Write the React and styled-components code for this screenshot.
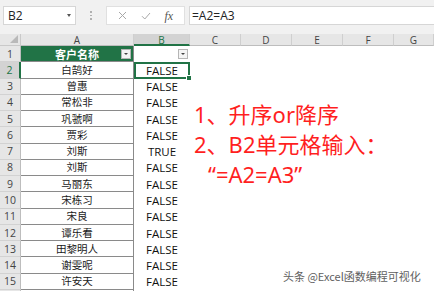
import React from "react";
import styled, { createGlobalStyle } from "styled-components";

const Global = createGlobalStyle`
  html, body { margin: 0; padding: 0; background: #fff; }
  body { width: 434px; height: 291px; overflow: hidden; font-family: "Open Sans", "Noto Sans CJK SC", sans-serif; }
`;

const Page = styled.div`
  position: relative;
  width: 434px;
  height: 291px;
  overflow: hidden;
  background: #fff;
`;

const FormulaBar = styled.div`
  height: 34px;
  box-sizing: border-box;
  background: #f1f1f1;
  display: grid;
  grid-template-columns: 73px 22px 79px 1fr;
  column-gap: 4px;
  padding: 6px 0 9px 3px;
  align-items: stretch;
`;

const NameBox = styled.div`
  background: #fff;
  border: 1px solid #d6d6d6;
  display: flex;
  align-items: center;
  justify-content: space-between;
  padding: 0 4px 0 4px;
  font-size: 12px;
  line-height: 14px;
  color: #222;
`;

const Caret = styled.span`
  width: 0;
  height: 0;
  border-left: 2.5px solid transparent;
  border-right: 2.5px solid transparent;
  border-top: 3px solid #555;
`;

const Dots = styled.div`
  display: flex;
  flex-direction: column;
  align-items: center;
  justify-content: center;
  gap: 2px;
  & span { width: 1.5px; height: 1.5px; background: #b0b0b0; }
`;

const FnBox = styled.div`
  background: #fff;
  border: 1px solid #e0e0e0;
  display: flex;
  align-items: center;
  justify-content: space-around;
  padding: 0 4px;
  color: #a8a8a8;
`;

const Fx = styled.span`
  font-family: "Liberation Serif", serif;
  font-style: italic;
  font-size: 12px;
  line-height: 14px;
  color: #555;
`;

const FormulaInput = styled.div`
  background: #fff;
  border: 1px solid #d6d6d6;
  border-right: none;
  display: flex;
  align-items: center;
  padding-left: 2px;
  font-size: 12px;
  line-height: 14px;
  color: #222;
`;

const Sheet = styled.div`
  display: grid;
  grid-template-columns: 21px 113px 56px 51px 51px 51px 51px 1fr;
  grid-template-rows: 12px repeat(16, 16.27px);
`;

const Corner = styled.div`
  background: #e6e6e6;
  border-right: 1px solid #c9c9c9;
  border-bottom: 1px solid #c9c9c9;
  display: flex;
  align-items: flex-end;
  justify-content: flex-end;
  padding: 0 2px 2px 0;
  & span {
    width: 8px;
    height: 8px;
    background: #b9b9b9;
    clip-path: polygon(100% 0, 100% 100%, 0 100%);
  }
`;

const ColHead = styled.div`
  box-sizing: border-box;
  background: ${(p) => (p.$active ? "#d3d3d3" : "#e6e6e6")};
  border-right: 1px solid #cfcfcf;
  border-bottom: ${(p) => (p.$active ? "2px solid #217346" : "1px solid #bdbdbd")};
  color: ${(p) => (p.$active ? "#217346" : "#444")};
  font-size: 10px;
  line-height: 10px;
  display: flex;
  justify-content: center;
  align-items: center;
  padding-top: 1px;
`;

const RowHead = styled.div`
  box-sizing: border-box;
  background: ${(p) => (p.$active ? "#d3d3d3" : "#e6e6e6")};
  border-right: ${(p) => (p.$active ? "2px solid #217346" : "1px solid #bdbdbd")};
  border-bottom: 1px solid #d2d2d2;
  color: ${(p) => (p.$active ? "#217346" : "#444")};
  font-size: 10.5px;
  line-height: 12px;
  display: flex;
  justify-content: center;
  align-items: center;
`;

const NameCell = styled.div`
  box-sizing: border-box;
  background: ${(p) => (p.$head ? "#217346" : "#fff")};
  color: ${(p) => (p.$head ? "#fff" : "#1a1a1a")};
  font-weight: ${(p) => (p.$head ? 700 : 400)};
  font-family: "Noto Sans CJK SC", sans-serif;
  font-size: ${(p) => (p.$head ? "11px" : "10.5px")};
  line-height: 12px;
  border-right: 1px solid #8a8a8a;
  border-bottom: 1px solid #8a8a8a;
  display: grid;
  grid-template-columns: 12px 1fr 12px;
  align-items: center;
  text-align: center;
`;

const ValueCell = styled.div`
  position: relative;
  box-sizing: border-box;
  font-size: 11.5px;
  line-height: 13px;
  color: #111;
  display: grid;
  grid-template-columns: 12px 1fr 12px;
  align-items: center;
  text-align: center;
  ${(p) =>
    p.$selected &&
    `
    box-shadow: inset 0 0 0 2px #217346;
    &::after {
      content: "";
      position: absolute;
      right: -2px;
      bottom: -2px;
      width: 4px;
      height: 4px;
      background: #217346;
      border: 1px solid #fff;
    }
  `}
`;

const Blank = styled.div`
  background: #fff;
`;

const FilterBtn = styled.span`
  width: 10px;
  height: 10px;
  box-sizing: border-box;
  border: 1px solid #b5b5b5;
  background: #f4f4f4;
  display: flex;
  align-items: center;
  justify-content: center;
  & i {
    width: 0;
    height: 0;
    border-left: 2px solid transparent;
    border-right: 2px solid transparent;
    border-top: 2.5px solid #444;
  }
`;

const Note = styled.div`
  position: absolute;
  left: 194px;
  top: 99px;
  font-family: "Noto Sans", "Noto Sans CJK SC", sans-serif;
  font-size: 22px;
  line-height: 30px;
  color: #ff1f1f;
  white-space: pre;
`;

const NoteLine = styled.div`
  padding-left: ${(p) => p.$indent || 0}px;
`;

const Watermark = styled.div`
  position: absolute;
  left: 283px;
  top: 268px;
  font-family: "Noto Sans CJK SC", sans-serif;
  font-size: 11px;
  color: #606060;
  text-shadow: 0 0 2px #fff, 0 0 2px #fff;
  white-space: nowrap;
`;

const rows = [
  ["白鹄好", "FALSE"],
  ["曾惠", "FALSE"],
  ["常松非", "FALSE"],
  ["巩虢啊", "FALSE"],
  ["贾彩", "FALSE"],
  ["刘斯", "TRUE"],
  ["刘斯", "FALSE"],
  ["马丽东", "FALSE"],
  ["宋栋习", "FALSE"],
  ["宋良", "FALSE"],
  ["谭乐看", "FALSE"],
  ["田黎明人", "FALSE"],
  ["谢雯呢", "FALSE"],
  ["许安天", "FALSE"],
];

const cols = ["A", "B", "C", "D", "E", "F", "G"];

function Filter() {
  return (
    <FilterBtn>
      <i />
    </FilterBtn>
  );
}

function Blanks() {
  return (
    <>
      <Blank />
      <Blank />
      <Blank />
      <Blank />
      <Blank />
    </>
  );
}

export default function App() {
  return (
    <Page>
      <Global />
      <FormulaBar>
        <NameBox>
          B2
          <Caret />
        </NameBox>
        <Dots>
          <span />
          <span />
          <span />
        </Dots>
        <FnBox>
          <svg width="9" height="9" viewBox="0 0 9 9">
            <path d="M1 1L8 8M8 1L1 8" stroke="#a8a8a8" strokeWidth="1" fill="none" />
          </svg>
          <svg width="10" height="8" viewBox="0 0 10 8">
            <path d="M1 4.2L3.8 7L9 1" stroke="#a8a8a8" strokeWidth="1" fill="none" />
          </svg>
          <Fx>fx</Fx>
        </FnBox>
        <FormulaInput>=A2=A3</FormulaInput>
      </FormulaBar>
      <Sheet>
        <Corner>
          <span />
        </Corner>
        {cols.map((c) => (
          <ColHead key={c} $active={c === "B"}>
            {c}
          </ColHead>
        ))}
        <RowHead>1</RowHead>
        <NameCell $head>
          <span />
          <span>客户名称</span>
          <Filter />
        </NameCell>
        <ValueCell>
          <span />
          <span />
          <Filter />
        </ValueCell>
        <Blanks />
        {rows.map(([name, val], i) => (
          <React.Fragment key={i}>
            <RowHead $active={i === 0}>{i + 2}</RowHead>
            <NameCell>
              <span />
              <span>{name}</span>
              <span />
            </NameCell>
            <ValueCell $selected={i === 0}>
              <span />
              <span>{val}</span>
              <span />
            </ValueCell>
            <Blanks />
          </React.Fragment>
        ))}
        <RowHead />
        <NameCell />
        <ValueCell />
        <Blanks />
      </Sheet>
      <Note>
        <NoteLine>1、升序or降序</NoteLine>
        <NoteLine>2、B2单元格输入：</NoteLine>
        <NoteLine $indent={14}>“=A2=A3”</NoteLine>
      </Note>
      <Watermark>头条 @Excel函数编程可视化</Watermark>
    </Page>
  );
}
